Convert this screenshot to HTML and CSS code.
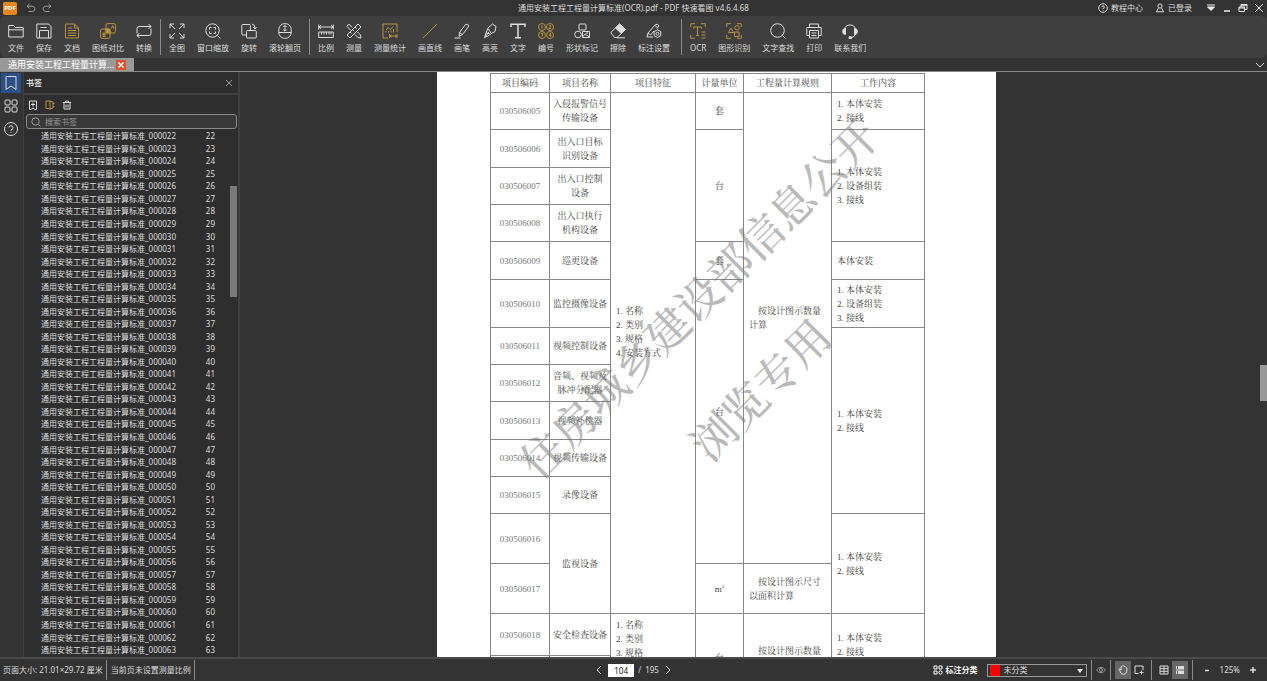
FILE: index.html
```html
<!DOCTYPE html>
<html lang="zh">
<head>
  <meta charset="UTF-8">
  <meta name="viewport" content="width=device-width, initial-scale=1.0">
  <title>PDF 快速看图</title>
  <link rel="stylesheet" href="styles.css">
</head>
<body>
  <!-- 标题栏 -->
  <header class="title-bar">
    <div class="title-left">
      <span class="logo">PDF</span>
      <button class="icon-btn dim" aria-label="撤销"><svg class="icon-s" viewBox="0 0 10 10"><path d="M3.5 1 1 3.2l2.5 2.2M1 3.2h5.2a2.6 2.6 0 0 1 0 5.3H2.5"/></svg></button>
      <button class="icon-btn dim" aria-label="重做"><svg class="icon-s" viewBox="0 0 10 10"><path d="M6.5 1 9 3.2 6.5 5.4M9 3.2H3.8a2.6 2.6 0 0 0 0 5.3h3.7"/></svg></button>
    </div>
    <h1 class="title-text">通用安装工程工程量计算标准(OCR).pdf - PDF 快速看图 v4.6.4.68</h1>
    <div class="title-right">
      <button class="text-btn"><svg class="icon-s" viewBox="0 0 10 10"><circle cx="5" cy="5" r="4.3"/><path d="M3.7 4a1.300 1.300 0 1 1 1.300 1.500v.6M5 7.200v.5"/></svg>教程中心</button>
      <button class="text-btn"><svg class="icon-s" viewBox="0 0 10 10"><circle cx="5" cy="3" r="2.1"/><path d="M3.5 5 1.500 8.800h7L6.500 5"/></svg>已登录</button>
      <div class="window-btns">
        <button class="icon-btn" aria-label="菜单"><svg class="icon-s" viewBox="0 0 10 10"><path d="M1 2h8"/><path class="fill" d="M1.500 4h7L5 7.500z"/></svg></button>
        <button class="icon-btn" aria-label="最小化"><svg class="icon-s" viewBox="0 0 10 10"><path stroke-width="1.500" d="M2 8h6"/></svg></button>
        <button class="icon-btn" aria-label="还原"><svg class="icon-s" viewBox="0 0 10 10"><path d="M1 4h5.500v4.500H1zM1 5h5.500M3 4V1.500h6v5H6.500M3 2.300h6"/></svg></button>
        <button class="icon-btn" aria-label="关闭"><svg class="icon-s" viewBox="0 0 10 10"><path d="m1 1 8 8M9 1 1 9"/></svg></button>
      </div>
    </div>
  </header>

  <!-- 工具栏 -->
  <nav class="toolbar">
    <button class="tool"><svg class="icon" viewBox="0 0 16 16"><path d="M.7 14V2.500h5l1.500 2h8V14zM.7 6.800h14.500"/></svg>文件</button>
    <button class="tool"><svg class="icon" viewBox="0 0 16 16"><path d="M.8 1h11.700L15 3.500V15H.8zM3.500 15V7.500h9V15M4.500 4.500h6"/></svg>保存</button>
    <button class="tool gold"><svg class="icon" viewBox="0 0 16 16"><path d="M1.500 1h9L14.500 5v10h-13zM10.500 1v4h4M4 5h4M4 7.500h8M4 10h8M4 12.500h8"/></svg>文档</button>
    <button class="tool gold"><svg class="icon" viewBox="0 0 16 16"><rect x="6" y=".6" width="9.400" height="9.400" rx="1.500"/><rect x=".6" y="6" width="9.400" height="9.400" rx="1.500"/><path class="fill" d="M6 6h4v4H6z"/><path d="M11.500 5.500 12.700 2.500l1.200 3M3 10v3.500h2V10zM3 11.700h2"/></svg>图纸对比</button>
    <button class="tool"><svg class="icon" viewBox="0 0 16 16"><path d="M1 10.500V5.500Q1 3.500 3 3.500h12M12.500 1 15 3.500 12.500 6M15 5.500v5q0 2-2 2H1M3.500 10 1 12.500 3.500 15"/></svg>转换</button>
    <span class="tool-sep"></span>
    <button class="tool"><svg class="icon" viewBox="0 0 16 16"><path d="M1 5V1h4M11 1h4v4M15 11v4h-4M5 15H1v-4M1 1l5 5M15 1l-5 5M15 15l-5-5M1 15l5-5"/></svg>全图</button>
    <button class="tool"><svg class="icon" viewBox="0 0 16 16"><circle cx="7.500" cy="7.500" r="6.700"/><path d="M12.300 12.300 15.500 15.500M4.500 6.500v-2h2M8.500 4.500h2v2M10.500 8.500v2h-2M6.500 10.500h-2v-2"/></svg>窗口缩放</button>
    <button class="tool"><svg class="icon" viewBox="0 0 16 16"><rect x=".8" y="1.500" width="8.500" height="10.500" rx="1"/><rect class="cut" x="5.500" y="7.500" width="9.800" height="7.500" rx="1"/><path d="M11 1q3 .5 3 4.500M12 4l2 2 1.500-2"/></svg>旋转</button>
    <button class="tool"><svg class="icon" viewBox="0 0 16 16"><rect x="1.800" y=".6" width="12.400" height="14.800" rx="6"/><path d="M1.800 9.500h12.400M8 2.500v5.500M6.300 4 8 2.300 9.700 4M6.300 6.500 8 8.200l1.700-1.700"/></svg>滚轮翻页</button>
    <span class="tool-sep"></span>
    <button class="tool"><svg class="icon" viewBox="0 0 16 16"><path d="M.7 1.500v5M15.300 1.500v5M1 4h14M3 2.300 1 4l2 1.700M13 2.300 15 4l-2 1.700M.7 9h14.600v5.500H.7zM3.500 9v2.500M6 9v2.500M8.500 9v2.500M11 9v2.500M13 9v2.500"/></svg>比例</button>
    <button class="tool"><svg class="icon" viewBox="0 0 16 16"><path d="M1 12 12 1l3 3L4 15zM4 9l1.500 1.500M6.500 6.500 8 8M9 4l1.500 1.500M6 4.500 3.500 1.500Q1.500 1 1 3.500L4.500 7M9 11.500l3 3 3 .5-.5-3-3-3"/></svg>测量</button>
    <button class="tool gold"><svg class="icon" viewBox="0 0 16 16"><path d="M6 15H1V1h14v8M4 7l2-2.500 2 2 3.500-3M4 9.500V8M6.500 9.500V8M9 9.500V7.500M11.500 9.500V6M7.500 11v4M15 11v4M8 13h7M9.500 11.800 8 13l1.500 1.200M13 11.800 14.500 13 13 14.200"/></svg>测量统计</button>
    <button class="tool gold"><svg class="icon" viewBox="0 0 16 16"><path d="M1 15 15 1"/></svg>画直线</button>
    <button class="tool"><svg class="icon" viewBox="0 0 16 16"><path d="M5 13.500 5.500 9.500 11.500 1.500q2.500-1 3.500 1.500L8.500 11.500zM5.500 9.500l3 2M.5 15h6"/></svg>画笔</button>
    <button class="tool"><svg class="icon" viewBox="0 0 16 16"><path d="M4 10 6 5l4.500-4 3.500 2.500-1 5L8.500 11zM4 10l-1.500 4.500L7 12.500 8.500 11M6 5.500 9 10M2.500 14.500 7 9"/></svg>高亮</button>
    <button class="tool"><svg class="icon" viewBox="0 0 16 16"><path stroke-width="1.500" d="M1 4V1.200h14V4M8 1.200v13.500M5 14.700h6"/></svg>文字</button>
    <button class="tool gold"><svg class="icon" viewBox="0 0 16 16"><circle cx="4" cy="4" r="3.500"/><circle cx="12" cy="4" r="3.500"/><circle cx="4" cy="12" r="3.500"/><circle cx="12" cy="12" r="3.500"/><path d="M4 2.200v3.600M11 3q1-1.200 2 0L11 5.500h2M3 10.500h2L4 12q2 .5-.8 1.700M12.500 13.800V10.200L11 12.500h2.300"/></svg>编号</button>
    <button class="tool"><svg class="icon" viewBox="0 0 16 16"><rect x="5" y="1" width="7" height="6" rx="1"/><circle cx="4" cy="11.500" r="3.300"/><path d="M8.500 8.500h7v6h-7zM8.500 14 11 11l4.500 3M12 10h2"/></svg>形状标记</button>
    <button class="tool"><svg class="icon" viewBox="0 0 16 16"><path d="m.8 9.500 8.700-8.500 6 5.500L7 14.500H4.500z"/><path class="fill" d="M5.500 5 9.500 1l6 5.500-4.200 4z"/><path d="M7 14.800h8"/></svg>擦除</button>
    <button class="tool"><svg class="icon" viewBox="0 0 16 16"><path d="M7 14H1l1-4 7.500-8.500q2.500-1 3.500 1.500L11 5.500M2 10l2.500 2L8 8M9 2.500 12 5"/><path d="m11.500 6.800 3.300 1.900v3.900l-3.300 1.900-3.400-1.900V8.700z"/><circle cx="11.500" cy="10.700" r="1.500"/></svg>标注设置</button>
    <span class="tool-sep wide"></span>
    <button class="tool gold"><svg class="icon" viewBox="0 0 16 16"><path d="M.7 4V.7H5M11 .7h4.300V4M.7 12v3.300H5M3.500 5.500V4h8v1.500M7.500 4v8.500M6 12.500h3M11.500 9h4M11.500 12h4M11.500 15h4"/></svg>OCR</button>
    <button class="tool gold"><svg class="icon" viewBox="0 0 16 16"><path d="M.7 4V.7H5M11 .7h4.300V4M.7 12v3.300H5M15.300 12v3.300H11M2.500 9.500 5 5l2.500 4.500zM8.500 9H13v4.500H8.500z"/><circle cx="11" cy="4.800" r="2.200"/></svg>图形识别</button>
    <button class="tool"><svg class="icon" viewBox="0 0 16 16"><circle cx="7.500" cy="7.500" r="6.800"/><path d="m12.300 12.300 3.200 3.200"/></svg>文字查找</button>
    <button class="tool"><svg class="icon" viewBox="0 0 16 16"><path d="M3.500 4.500V1h9v3.500M3.500 12.500H.8v-8h14.400v8h-2.700M3.500 7.500h9V15h-9zM5.500 10h5M5.500 12.500h5"/></svg>打印</button>
    <button class="tool"><svg class="icon" viewBox="0 0 16 16"><path d="M2.500 6.500a5.600 5.600 0 0 1 11 0M13.500 11q-1 3.500-4.500 3.700"/><path class="fill" d="M3.500 5.500v6Q.6 11.500.6 8.500t2.900-3zM12.500 5.500v6q2.900 0 2.900-3t-2.900-3zM7 13.800h2.500v1.700H7z"/></svg>联系我们</button>
  </nav>

  <!-- 文档标签 -->
  <div class="tabs">
    <div class="tab">
      <span>通用安装工程工程量计算...</span>
      <button class="tab-close" aria-label="关闭标签"><svg viewBox="0 0 10 10"><path stroke-width="1.500" d="m2.500 2.500 5 5M7.500 2.500l-5 5"/></svg></button>
    </div>
    <button class="icon-btn" aria-label="展开"><svg class="icon-s" viewBox="0 0 10 10"><path d="m1 3 4 4 4-4"/></svg></button>
  </div>

  <main class="workspace">
    <nav class="rail">
      <button class="rail-btn active" aria-label="书签"><svg viewBox="0 0 16 16"><path d="M3 1.500h10v13L8 11l-5 3.500z"/></svg></button>
      <button class="rail-btn" aria-label="缩略图"><svg viewBox="0 0 16 16"><rect x="2" y="2" width="5" height="5" rx="1"/><rect x="9" y="2" width="5" height="5" rx="1"/><rect x="2" y="9" width="5" height="5" rx="1"/><rect x="9" y="9" width="5" height="5" rx="1"/></svg></button>
      <button class="rail-btn" aria-label="帮助"><svg viewBox="0 0 16 16"><circle cx="8" cy="8" r="6.500"/><path d="M6 6.500a2 2 0 1 1 2 2.200v1M8 11v1"/></svg></button>
    </nav>

    <!-- 书签面板 -->
    <aside class="panel">
      <div class="panel-head">
        <h2>书签</h2>
        <button class="icon-btn dim" aria-label="关闭面板"><svg class="icon-s" viewBox="0 0 10 10"><path d="m2 2 6 6M8 2 2 8"/></svg></button>
      </div>
      <div class="panel-tools">
        <button class="icon-btn" aria-label="添加书签"><svg class="icon-s" viewBox="0 0 10 10"><path d="M1.500 1h7v8.500H7L5 8 3 9.500H1.500zM5 2.500v4M3 4.500h4"/></svg></button>
        <button class="icon-btn gold" aria-label="自动书签"><svg class="icon-s" viewBox="0 0 10 10"><path d="M5 1H1v7.500h3L5 9.500V1l3 1v6L5 9M8 3.500h1.500M8 6.500h1.500"/></svg></button>
        <button class="icon-btn" aria-label="删除书签"><svg class="icon-s" viewBox="0 0 10 10"><path d="M.8 2.500h8.400M3.500 2.500V1h3v1.500M2 2.500V9h6V2.500M4 4.500v3M6 4.500v3"/></svg></button>
      </div>
      <label class="search">
        <svg class="icon-s" viewBox="0 0 10 10"><circle cx="4.500" cy="4.500" r="3.700"/><path d="m7.200 7.200 2.300 2.300"/></svg>
        <input type="text" placeholder="搜索书签" aria-label="搜索书签">
      </label>
      <div class="list-wrap">
        <ul class="bookmarks" id="bookmarks"></ul>
        <div class="list-track"><span class="list-thumb"></span></div>
      </div>
    </aside>

    <!-- 页面显示区 -->
    <section class="viewer">
      <div class="page">
        <table class="spec">
          <colgroup>
            <col class="c-code"><col class="c-name"><col class="c-feature"><col class="c-unit"><col class="c-rule"><col class="c-work">
          </colgroup>
          <thead>
            <tr class="r-head"><th>项目编码</th><th>项目名称</th><th>项目特征</th><th>计量单位</th><th>工程量计算规则</th><th>工作内容</th></tr>
          </thead>
          <tbody>
            <tr><td class="code">030506005</td><td>入侵报警信号<br>传输设备</td>
              <td class="left raised-2" rowspan="13">1. 名称<br>2. 类别<br>3. 规格<br>4. 安装方式</td>
              <td>套</td>
              <td class="left rule raised" rowspan="12">按设计图示数量<br>计算</td>
              <td class="left">1. 本体安装<br>2. 接线</td></tr>
            <tr class="r-38"><td class="code">030506006</td><td>出入口目标<br>识别设备</td><td rowspan="3">台</td><td class="left" rowspan="3">1. 本体安装<br>2. 设备组装<br>3. 接线</td></tr>
            <tr><td class="code">030506007</td><td>出入口控制<br>设备</td></tr>
            <tr><td class="code">030506008</td><td>出入口执行<br>机构设备</td></tr>
            <tr class="r-38"><td class="code">030506009</td><td>巡更设备</td><td>套</td><td class="left">本体安装</td></tr>
            <tr class="r-48"><td class="code">030506010</td><td>监控摄像设备</td><td class="raised" rowspan="7">台</td><td class="left">1. 本体安装<br>2. 设备组装<br>3. 接线</td></tr>
            <tr><td class="code">030506011</td><td>视频控制设备</td><td class="left" rowspan="5">1. 本体安装<br>2. 接线</td></tr>
            <tr><td class="code">030506012</td><td>音频、视频及<br>脉冲分配器</td></tr>
            <tr class="r-38"><td class="code">030506013</td><td>视频补偿器</td></tr>
            <tr><td class="code">030506014</td><td>视频传输设备</td></tr>
            <tr><td class="code">030506015</td><td>录像设备</td></tr>
            <tr class="r-50"><td class="code">030506016</td><td rowspan="2">监视设备</td><td class="left" rowspan="2">1. 本体安装<br>2. 接线</td></tr>
            <tr class="r-50"><td class="code">030506017</td><td>m<sup>2</sup></td><td class="left rule">按设计图示尺寸<br>以面积计算</td></tr>
            <tr class="r-42"><td class="code">030506018</td><td>安全检查设备</td>
              <td class="left top" rowspan="2">1. 名称<br>2. 类别<br>3. 规格</td>
              <td rowspan="3">台</td>
              <td class="left rule" rowspan="3">按设计图示数量<br>计算</td>
              <td class="left" rowspan="2">1. 本体安装<br>2. 接线</td></tr>
            <tr class="r-21"><td rowspan="2"></td><td rowspan="2"></td></tr>
            <tr class="r-26"><td></td><td></td></tr>
          </tbody>
        </table>
        <div class="watermark wm-long">住房城乡建设部信息公开</div>
        <div class="watermark wm-short">浏览专用</div>
      </div>
      <span class="view-thumb"></span>
    </section>
  </main>

  <!-- 状态栏 -->
  <footer class="status">
    <div class="status-left">
      <span class="status-cell">页面大小: 21.01×29.72 厘米</span>
      <span class="status-cell">当前页未设置测量比例</span>
    </div>
    <div class="pager">
      <button class="icon-btn" aria-label="上一页"><svg class="icon-s" viewBox="0 0 10 10"><path d="M7 1 3 5l4 4"/></svg></button>
      <input class="page-input" type="text" value="104" aria-label="页码">
      <span>/</span><span>195</span>
      <button class="icon-btn" aria-label="下一页"><svg class="icon-s" viewBox="0 0 10 10"><path d="m3 1 4 4-4 4"/></svg></button>
    </div>
    <div class="status-right">
      <label class="kind-label" for="kind"><svg class="icon-s" viewBox="0 0 10 10"><path d="M1 1h3v3H1zM6 1h3v3H6zM1 6h3v3H1z"/><circle cx="7.500" cy="7.500" r="1.700"/></svg>标注分类</label>
      <div class="kind">
        <span class="swatch"></span>
        <select id="kind"><option>未分类</option></select>
      </div>
      <div class="status-group"><button class="icon-btn dim" aria-label="显示标注"><svg class="icon-s" viewBox="0 0 10 10"><path d="M.5 5Q5-.5 9.500 5 5 10.500.5 5z"/><circle cx="5" cy="5" r="1.500"/></svg></button></div>
      <div class="status-group">
        <button class="mode active" aria-label="手型"><svg class="icon-s" viewBox="0 0 10 10"><path d="M2 6 .8 4.300l1-.6L3 5V2l1-.5.8-.8 1.200.6 1.200.2.8 1 .8.5v3.200Q8.500 9.400 5.500 9.400T2 6z"/></svg></button>
        <button class="mode" aria-label="框选"><svg class="icon-s" viewBox="0 0 10 10"><path d="M4.500 8.500H1V1h8v4M5.500 7.500h4M7.500 5.500v4"/></svg></button>
      </div>
      <div class="status-group">
        <button class="mode" aria-label="双页"><svg class="icon-s" viewBox="0 0 10 10"><path d="M1 1h8v8H1zM5 1v8M1 3.700h8M1 6.300h8"/></svg></button>
        <button class="mode active" aria-label="连续"><svg class="icon-s" viewBox="0 0 10 10"><path class="fill" stroke="none" d="M1 1h1v3H1zM3 1h6v3H3zM1 4.500h8v1H1zM1 6h1v3H1zM3 6h6v3H3z"/></svg></button>
      </div>
      <div class="zoom">
        <button class="icon-btn" aria-label="缩小"><svg class="icon-s" viewBox="0 0 10 10"><path stroke-width="1.500" d="M3 5.500h4"/></svg></button>
        <span>125%</span>
        <button class="icon-btn" aria-label="放大"><svg class="icon-s" viewBox="0 0 10 10"><path stroke-width="1.500" d="M2 5h6M5 2v6"/></svg></button>
      </div>
    </div>
  </footer>

  <script>
    // 生成书签列表
    const list = document.getElementById('bookmarks');
    for (let i = 22; i <= 63; i++) {
      const li = document.createElement('li');
      const name = document.createElement('a');
      const page = document.createElement('span');
      name.href = '#' + i;
      name.textContent = '通用安装工程工程量计算标准_' + String(i).padStart(6, '0');
      page.textContent = i;
      li.append(name, page);
      list.appendChild(li);
    }
  </script>
</body>
</html>
```
FILE: styles.css
```css
/* 基础样式 */
* {
  box-sizing: border-box;
}

body {
  margin: 0;
  height: 100vh;
  display: flex;
  flex-direction: column;
  overflow: hidden;
  background: #333;
  color: #ddd;
  font: 8px/10px "Noto Sans", "Noto Sans CJK SC", sans-serif;
}

button,
input,
select {
  margin: 0;
  padding: 0;
  border: 0;
  background: none;
  color: inherit;
  font: inherit;
}

h1,
h2,
ul {
  margin: 0;
  padding: 0;
  font-size: 8px;
}

svg {
  display: block;
  fill: none;
  stroke: currentColor;
  stroke-width: 1;
}

.fill {
  fill: currentColor;
}

.cut {
  fill: #3f3f3f;
}

.icon {
  width: 16px;
  height: 16px;
}

.icon-s {
  width: 10px;
  height: 10px;
  flex: none;
}

.icon-btn {
  flex: none;
}

.dim {
  color: #999;
}

.gold svg {
  color: #b8923c;
}

/* 标题栏 */
.title-bar {
  display: grid;
  grid-template-columns: 1fr auto 1fr;
  align-items: center;
  height: 16px;
  flex: none;
}

.title-left {
  display: flex;
  align-items: center;
  gap: 6px;
  padding-left: 3px;
}

.logo {
  width: 14px;
  height: 13px;
  margin-right: 3px;
  border-radius: 2px;
  background: #e8871e;
  color: #fff;
  font-size: 6px;
  font-weight: bold;
  line-height: 13px;
  text-align: center;
}

.title-text {
  font-weight: normal;
}

.title-right {
  display: flex;
  justify-content: flex-end;
  gap: 12px;
  padding-right: 3px;
}

.text-btn {
  display: flex;
  align-items: center;
  gap: 3px;
}

.window-btns {
  display: flex;
  gap: 6px;
  margin-left: 2px;
  color: #eee;
}

/* 工具栏 */
.toolbar {
  display: flex;
  height: 42px;
  padding: 0 2px;
  flex: none;
  border-radius: 6px;
  background: #3f3f3f;
}

.tool {
  display: flex;
  flex-direction: column;
  align-items: center;
  gap: 4px;
  padding: 7px 6px 0;
  flex: none;
}

.tool-sep {
  width: 1px;
  margin: 3px 2px;
  background: #8a8a8a;
}

.tool-sep.wide {
  margin-left: 5px;
}

/* 标签栏 */
.tabs {
  display: flex;
  justify-content: space-between;
  align-items: center;
  height: 14px;
  padding-right: 2px;
  flex: none;
  border-bottom: 1px solid #8a8a8a;
}

.tab {
  display: flex;
  align-items: center;
  gap: 2px;
  height: 13px;
  padding: 0 8px;
  background: #999;
  color: #fff;
  font-size: 9px;
}

.tab-close {
  width: 10px;
  height: 10px;
  background: #d9532c;
}

/* 主体 */
.workspace {
  display: flex;
  flex: 1;
  min-height: 0;
}

.rail {
  display: flex;
  flex-direction: column;
  gap: 3px;
  width: 23px;
  padding: 1px;
}

.rail-btn {
  width: 20px;
  height: 20px;
  padding: 2px;
}

.rail-btn.active {
  background: #2b4f86;
}

/* 书签面板 */
.panel {
  display: flex;
  flex-direction: column;
  width: 217px;
  border: solid #404040;
  border-width: 0 2px 0 1px;
  background: #2e2e2e;
}

.panel-head {
  display: flex;
  justify-content: space-between;
  align-items: center;
  height: 23px;
  padding: 0 4px 0 2px;
  flex: none;
  border-bottom: 2px solid #404040;
}

.panel-tools {
  display: flex;
  gap: 7px;
  padding: 5px 4px 4px;
}

.search {
  display: flex;
  align-items: center;
  gap: 4px;
  height: 15px;
  margin: 0 1px 0 2px;
  padding: 0 4px;
  flex: none;
  border: 1px solid #8a8a8a;
  border-radius: 3px;
  background: #383838;
  color: #999;
}

.search input {
  flex: 1;
  min-width: 0;
}

.search input::placeholder {
  color: #999;
}

.list-wrap {
  display: flex;
  flex: 1;
  min-height: 0;
}

.bookmarks {
  display: flex;
  flex-direction: column;
  flex: 1;
  padding: 1px 0 1px 17px;
  list-style: none;
}

.bookmarks li {
  display: flex;
  justify-content: space-between;
  align-items: center;
  flex: 1;
  min-height: 0;
  padding-right: 15px;
}

.bookmarks a {
  color: inherit;
  text-decoration: none;
}

.list-track {
  width: 7px;
  padding-top: 57px;
  margin-right: 1px;
}

.list-thumb {
  display: block;
  height: 111px;
  background: #7a7a7a;
}

/* 页面显示区 */
.viewer {
  position: relative;
  display: flex;
  justify-content: center;
  flex: 1;
  min-width: 0;
  padding-right: 74px;
  overflow: hidden;
}

.page {
  position: relative;
  width: 559px;
  padding: 1px 0 0 53px;
  flex: none;
  overflow: hidden;
  background: #fff;
  color: #444;
}

.view-thumb {
  position: absolute;
  top: 50%;
  right: 0;
  width: 7px;
  height: 36px;
  background: #999;
}

.spec {
  width: 434px;
  table-layout: fixed;
  border-collapse: collapse;
  border: 1px solid #777;
  font: 9px/14px "Liberation Serif", "Noto Serif CJK SC", "Noto Sans CJK SC", serif;
  text-align: center;
}

.c-code { width: 59px; }
.c-name { width: 61px; }
.c-feature { width: 85px; }
.c-unit { width: 48px; }
.c-rule { width: 88px; }
.c-work { width: 93px; }

.spec th,
.spec td {
  padding: 0;
  border: 1px solid #888;
  font-weight: normal;
}

.spec tr { height: 37px; }
.spec .r-head { height: 19px; }
.spec .r-21 { height: 21px; }
.spec .r-26 { height: 26px; }
.spec .r-38 { height: 38px; }
.spec .r-42 { height: 42px; }
.spec .r-48 { height: 48px; }
.spec .r-50 { height: 50px; }

.spec .code {
  color: #777;
}

.spec .left {
  padding-left: 5px;
  text-align: left;
}

.spec .rule {
  text-indent: 9px;
  white-space: nowrap;
}

/* 跨页合并格的文字位于偏上处 */
.spec .raised {
  padding-bottom: 20px;
}

.spec .raised-2 {
  padding-bottom: 42px;
}

.spec .top {
  padding-top: 4px;
  vertical-align: top;
}

.spec sup {
  font-size: 5px;
  line-height: 1;
}

/* 水印 */
.watermark {
  position: absolute;
  color: #777;
  opacity: 0.5;
  font: 500 44px/44px "Noto Serif CJK SC", "Noto Sans CJK SC", serif;
  white-space: nowrap;
  transform: translate(-50%, -50%) rotate(-45deg);
}

.wm-long {
  left: 260px;
  top: 225px;
}

.wm-short {
  left: 322px;
  top: 316px;
}

/* 状态栏 */
.status {
  display: grid;
  grid-template-columns: 1fr auto 1fr;
  height: 24px;
  flex: none;
  border-top: 2px solid #4a4a4a;
}

.status-left,
.status-right,
.status-group,
.pager,
.zoom,
.kind-label {
  display: flex;
  align-items: center;
}

.status-cell {
  padding: 5px 3px 5px 4px;
  border-right: 1px solid #8a8a8a;
}

.status-cell:first-child {
  padding-left: 3px;
}

.pager {
  gap: 4px;
}

.page-input {
  width: 26px;
  height: 13px;
  background: #fff;
  color: #222;
  text-align: center;
}

.status-right {
  justify-content: flex-end;
}

.kind-label {
  gap: 3px;
  color: #fff;
  font-weight: bold;
}

.kind {
  position: relative;
  width: 100px;
  margin: 0 4px 0 9px;
}

.kind select {
  display: block;
  width: 100%;
  height: 13px;
  padding-left: 16px;
  border: 1px solid #999;
  appearance: none;
}

.kind::after {
  content: "";
  position: absolute;
  top: 5px;
  right: 4px;
  border: solid transparent;
  border-width: 4px 3px 0;
  border-top-color: #fff;
}

.swatch {
  position: absolute;
  top: 1px;
  left: 3px;
  width: 10px;
  height: 11px;
  background: #f00;
}

.status-group {
  height: 20px;
  padding: 0 4px;
  border-left: 1px solid #8a8a8a;
}

.mode {
  width: 16px;
  height: 18px;
  padding: 4px 3px;
}

.mode.active {
  background: #666;
}

.zoom {
  gap: 8px;
  height: 20px;
  padding: 0 9px;
  border-left: 1px solid #8a8a8a;
}
```
